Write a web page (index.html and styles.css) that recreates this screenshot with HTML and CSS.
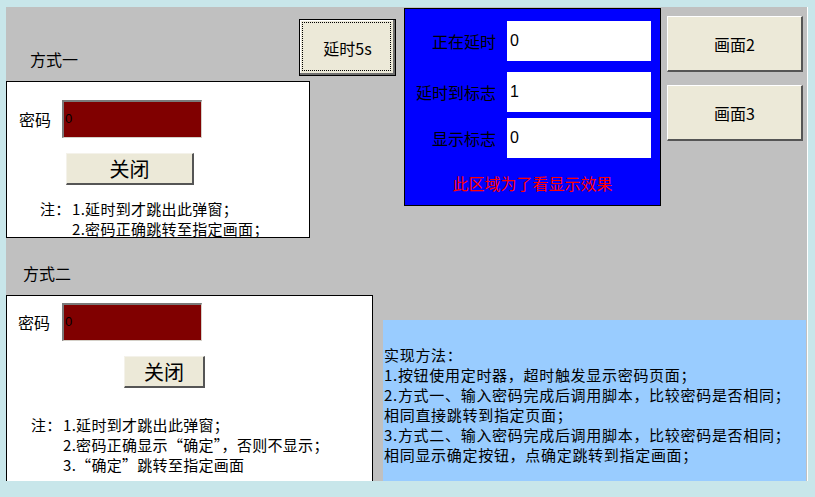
FILE: index.html
```html
<!DOCTYPE html>
<html>
<head>
<meta charset="utf-8">
<title>延时弹窗</title>
<link rel="stylesheet" href="styles.css">
</head>
<body>
<div class="screen">

  <div class="caption caption-one">方式一</div>
  <div class="panel panel-one">
    <div class="pwd-row">
      <span class="pwd-label">密码</span>
      <div class="pwd-input">0</div>
    </div>
    <div class="btn close-btn">关闭</div>
    <div class="note">
      <span class="note-head">注：</span>
      <div class="note-lines">
        1.延时到才跳出此弹窗；<br>
        2.密码正确跳转至指定画面；
      </div>
    </div>
  </div>

  <div class="btn-delay">延时5s</div>

  <div class="monitor">
    <div class="mon-row">
      <span class="mon-label">正在延时</span>
      <div class="mon-value">0</div>
    </div>
    <div class="mon-row row-2">
      <span class="mon-label">延时到标志</span>
      <div class="mon-value">1</div>
    </div>
    <div class="mon-row row-3">
      <span class="mon-label">显示标志</span>
      <div class="mon-value">0</div>
    </div>
    <div class="mon-tip">此区域为了看显示效果</div>
  </div>

  <div class="btn page-btn page-2">画面2</div>
  <div class="btn page-btn page-3">画面3</div>

  <div class="caption caption-two">方式二</div>
  <div class="panel panel-two">
    <div class="pwd-row">
      <span class="pwd-label">密码</span>
      <div class="pwd-input">0</div>
    </div>
    <div class="btn close-btn">关闭</div>
    <div class="note">
      <span class="note-head">注：</span>
      <div class="note-lines">
        1.延时到才跳出此弹窗；<br>
        2.密码正确显示“确定”，否则不显示；<br>
        3.“确定”跳转至指定画面
      </div>
    </div>
  </div>

  <div class="info">
    实现方法：<br>
    1.按钮使用定时器，超时触发显示密码页面；<br>
    2.方式一、输入密码完成后调用脚本，比较密码是否相同；<br>
    相同直接跳转到指定页面；<br>
    3.方式二、输入密码完成后调用脚本，比较密码是否相同；<br>
    相同显示确定按钮，点确定跳转到指定画面；
  </div>

</div>
</body>
</html>
```

FILE: styles.css
```css
body {
  margin: 0;
  background-color: #c8e6ea;
  font-family: "Noto Sans CJK SC", "Liberation Sans", sans-serif;
  color: #000;
}

/* HMI canvas, widgets sit at their own screen positions */
.screen {
  position: relative;
  left: 6px;
  top: 7px;
  width: 801px;
  height: 480px;
  background-color: #c0c0c0;
  border-right: 1px solid #fff;
  border-bottom: 1px solid #fff;
}

.caption {
  position: absolute;
  font-size: 16px;
  line-height: 20px;
}
.caption-one {
  left: 24px;
  top: 42px;
}
.caption-two {
  left: 17px;
  top: 256px;
}

.panel {
  position: absolute;
  left: 0;
  box-sizing: border-box;
  background-color: #fff;
  border: 1px solid #000;
  display: flex;
  flex-direction: column;
  align-items: flex-start;
}
.panel-one {
  top: 74px;
  width: 304px;
  height: 157px;
  padding: 18px 0 0 12px;
}
.panel-two {
  top: 288px;
  width: 367px;
  height: 192px;
  padding: 7px 0 0 11px;
  border-bottom: none;
}

.pwd-row {
  display: flex;
  align-items: center;
}
.pwd-label {
  font-size: 16px;
  line-height: 20px;
  width: 32px;
}
.pwd-input {
  box-sizing: border-box;
  width: 140px;
  height: 38px;
  margin-left: 11px;
  background-color: #800000;
  border-style: solid;
  border-width: 2px 1px 1px 2px;
  border-color: #7a7a7a #d4d0c8 #d4d0c8 #7a7a7a;
  font-family: "Liberation Sans", sans-serif;
  font-size: 13px;
  line-height: 34px;
  padding-left: 1px;
  color: #000;
}
.panel-two .pwd-input {
  margin-left: 12px;
}

.btn {
  box-sizing: border-box;
  background-color: #ece9d8;
  border-style: solid;
  border-width: 1px 2px 2px 1px;
  border-color: #fff #555 #555 #fff;
  display: flex;
  align-items: center;
  justify-content: center;
}
.close-btn {
  height: 32px;
  font-size: 20px;
  border-top-color: #f4f2ea;
  border-left-color: #f4f2ea;
}
.panel-one .close-btn {
  width: 128px;
  margin: 15px 0 0 47px;
}
.panel-two .close-btn {
  width: 81px;
  margin: 15px 0 0 106px;
}

.note {
  display: flex;
  font-size: 15px;
  line-height: 20px;
  letter-spacing: 0.3px;
}
.note-head {
  width: 32px;
}
.panel-one .note {
  margin: 14px 0 0 21px;
}
.panel-two .note {
  margin: 27px 0 0 13px;
}

.btn-delay {
  position: absolute;
  left: 293px;
  top: 12px;
  width: 97px;
  height: 57px;
  box-sizing: border-box;
  background-color: #ece9d8;
  border: 1px solid #000;
  box-shadow: inset -2px -2px #6e6e6e, inset 1px 1px #fff;
  font-size: 16px;
  display: flex;
  align-items: center;
  justify-content: center;
}
.btn-delay::after {
  content: "";
  position: absolute;
  left: 2px;
  top: 2px;
  right: 4px;
  bottom: 4px;
  border: 1px dotted #000;
}

.monitor {
  position: absolute;
  left: 398px;
  top: 1px;
  width: 257px;
  height: 198px;
  box-sizing: border-box;
  background-color: #0000ff;
  border: 1px solid #000;
  padding-top: 12px;
  display: flex;
  flex-direction: column;
}
.mon-row {
  display: flex;
  align-items: center;
}
.row-2 {
  margin-top: 11px;
}
.row-3 {
  margin-top: 6px;
}
.mon-label {
  width: 91px;
  text-align: right;
  font-size: 16px;
  line-height: 20px;
  white-space: nowrap;
}
.mon-value {
  width: 144px;
  height: 40px;
  margin-left: 11px;
  background-color: #fff;
  font-family: "Liberation Sans", sans-serif;
  font-size: 16px;
  line-height: 40px;
  padding-left: 3px;
  box-sizing: border-box;
}
.mon-tip {
  margin-top: 15px;
  color: #ff0000;
  font-size: 16px;
  line-height: 20px;
  text-align: center;
}

.page-btn {
  position: absolute;
  left: 661px;
  width: 136px;
  height: 56px;
  font-size: 16px;
}
.page-2 {
  top: 9px;
}
.page-3 {
  top: 78px;
}

.info {
  position: absolute;
  left: 377px;
  top: 313px;
  width: 423px;
  height: 167px;
  box-sizing: border-box;
  background-color: #99ccff;
  padding: 25px 0 0 1px;
  font-size: 15px;
  line-height: 20px;
  letter-spacing: 0.7px;
  white-space: nowrap;
}
```
